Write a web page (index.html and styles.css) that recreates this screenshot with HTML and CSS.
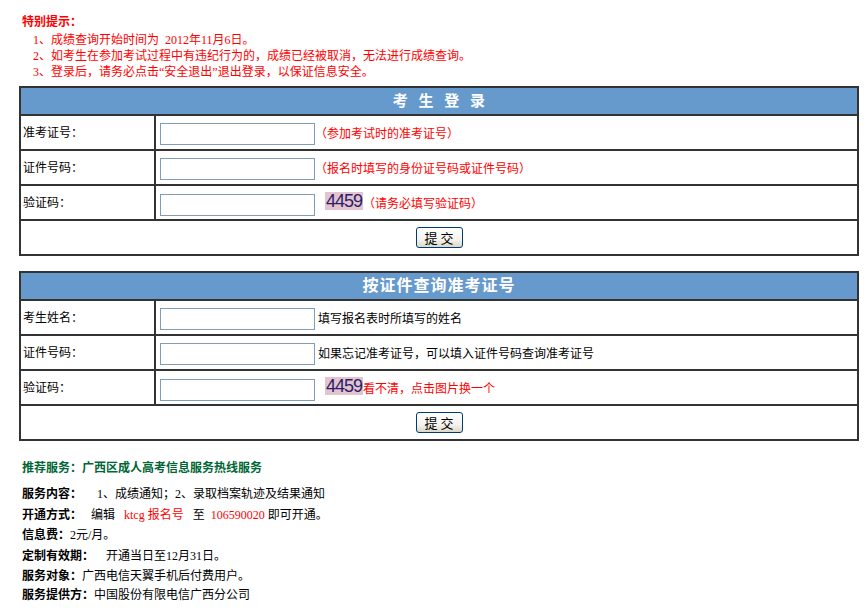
FILE: index.html
```html
<!DOCTYPE html>
<html lang="zh-CN">
<head>
<meta charset="utf-8">
<title>考生登录</title>
<link rel="stylesheet" href="styles.css">
</head>
<body>
<div class="page">
  <div class="notice">
    <div class="notice-title">特别提示：</div>
    <ul class="notice-list">
      <li>1、成绩查询开始时间为&nbsp; 2012年11月6日。</li>
      <li>2、如考生在参加考试过程中有违纪行为的，成绩已经被取消，无法进行成绩查询。</li>
      <li>3、登录后，请务必点击“安全退出”退出登录，以保证信息安全。</li>
    </ul>
  </div>

  <div class="panel">
    <div class="panel-head head-login">考 生 登 录</div>
    <div class="row">
      <div class="label">准考证号：</div>
      <div class="field"><div class="line"><input class="text-input" type="text"><span class="hint-red">（参加考试时的准考证号）</span></div></div>
    </div>
    <div class="row">
      <div class="label">证件号码：</div>
      <div class="field"><div class="line"><input class="text-input" type="text"><span class="hint-red">（报名时填写的身份证号码或证件号码）</span></div></div>
    </div>
    <div class="row">
      <div class="label">验证码：</div>
      <div class="field"><div class="line"><input class="text-input" type="text"><span class="captcha">4459</span><span class="hint-red">（请务必填写验证码）</span></div></div>
    </div>
    <div class="row-submit">
      <button class="btn" type="button">提 交</button>
    </div>
  </div>

  <div class="panel panel-second">
    <div class="panel-head head-query">按证件查询准考证号</div>
    <div class="row">
      <div class="label">考生姓名：</div>
      <div class="field"><div class="line"><input class="text-input" type="text"> <span class="hint">填写报名表时所填写的姓名</span></div></div>
    </div>
    <div class="row">
      <div class="label">证件号码：</div>
      <div class="field"><div class="line"><input class="text-input" type="text"> <span class="hint">如果忘记准考证号，可以填入证件号码查询准考证号</span></div></div>
    </div>
    <div class="row">
      <div class="label">验证码：</div>
      <div class="field"><div class="line"><input class="text-input" type="text"><span class="captcha">4459</span><span class="hint-plain-red">看不清，点击图片换一个</span></div></div>
    </div>
    <div class="row-submit">
      <button class="btn" type="button">提 交</button>
    </div>
  </div>

  <div class="service">
    <div class="service-title">推荐服务：广西区成人高考信息服务热线服务</div>
    <div class="service-line"><b>服务内容：</b>&nbsp;&nbsp;&nbsp;&nbsp; 1、成绩通知；2、录取档案轨迹及结果通知</div>
    <div class="service-line"><b>开通方式：</b>&nbsp;&nbsp; 编辑&nbsp;&nbsp; <span class="red">ktcg 报名号</span>&nbsp;&nbsp; 至&nbsp; <span class="red">106590020</span> 即可开通。</div>
    <div class="service-line"><b>信息费：</b>2元/月。</div>
    <div class="service-line"><b>定制有效期：</b>&nbsp;&nbsp;&nbsp; 开通当日至12月31日。</div>
    <div class="service-line"><b>服务对象：</b>广西电信天翼手机后付费用户。</div>
    <div class="service-line service-last"><b>服务提供方：</b>中国股份有限电信广西分公司</div>
  </div>
</div>
</body>
</html>
```

FILE: styles.css
```css
html, body {
  margin: 0;
  padding: 0;
  background: #ffffff;
}

body {
  font-family: "Liberation Serif", "Noto Sans CJK SC", serif;
  font-size: 12px;
  line-height: 16px;
  color: #000000;
  text-spacing-trim: space-all;
}

.page {
  padding: 14px 8px 0 19px;
}

.notice {
  color: #ff0000;
}

.notice-title {
  margin-left: 3px;
  font-weight: bold;
}

.notice-list {
  list-style: none;
  margin: 2px 0 0 14px;
  padding: 0;
}

.panel {
  width: 840px;
  box-sizing: border-box;
  border: 2px solid #333333;
  margin-top: 6px;
}

.panel-second {
  margin-top: 15px;
}

.panel-head {
  height: 26px;
  border-bottom: 2px solid #333333;
  background: #6699cc;
  color: #ffffff;
  font-weight: bold;
  display: flex;
  align-items: center;
  justify-content: center;
}

.head-login {
  font-size: 15px;
  word-spacing: 7px;
}

.head-query {
  font-size: 16px;
  letter-spacing: 1px;
}

.row {
  display: grid;
  grid-template-columns: 135px 1fr;
  height: 35px;
  box-sizing: border-box;
  border-bottom: 2px solid #333333;
}

.label {
  border-right: 2px solid #333333;
  display: flex;
  align-items: center;
  padding-left: 2px;
}

.field {
  display: flex;
  align-items: center;
  padding-left: 4px;
  padding-top: 3px;
}

.line {
  white-space: nowrap;
}

.text-input {
  width: 155px;
  height: 22px;
  box-sizing: border-box;
  border: 1px solid #7f9db9;
  padding: 0 2px;
  margin: 0;
  font-family: inherit;
  font-size: 12px;
  vertical-align: baseline;
}

.hint-red,
.hint-plain-red {
  color: #ff0000;
}

.hint {
  color: #000000;
}

.captcha {
  display: inline-block;
  width: 38px;
  height: 18px;
  margin-left: 10px;
  background: #e2c3cf;
  color: #2b1d68;
  font-family: "Liberation Sans", sans-serif;
  font-size: 18px;
  line-height: 19px;
  text-align: center;
  letter-spacing: -1px;
  vertical-align: -2px;
  overflow: hidden;
}

.row-submit {
  height: 33px;
  display: flex;
  align-items: center;
  justify-content: center;
}

.btn {
  width: 47px;
  height: 21px;
  padding: 0;
  border: 1px solid #003c74;
  border-radius: 3px;
  background: linear-gradient(#ffffff 0%, #f4f3ee 60%, #dcd8c8 100%);
  font-family: "Noto Sans CJK SC", sans-serif;
  font-size: 13px;
  line-height: 19px;
  color: #000000;
}

.service {
  margin: 19px 0 0 3px;
}

.service-title {
  color: #006633;
  font-weight: bold;
  margin-bottom: 8px;
}

.service-line {
  line-height: 20px;
  height: 20.5px;
}

.service-last {
  margin-top: -2px;
}

.service-line b {
  font-weight: bold;
}

.red {
  color: #ff0000;
}
```
